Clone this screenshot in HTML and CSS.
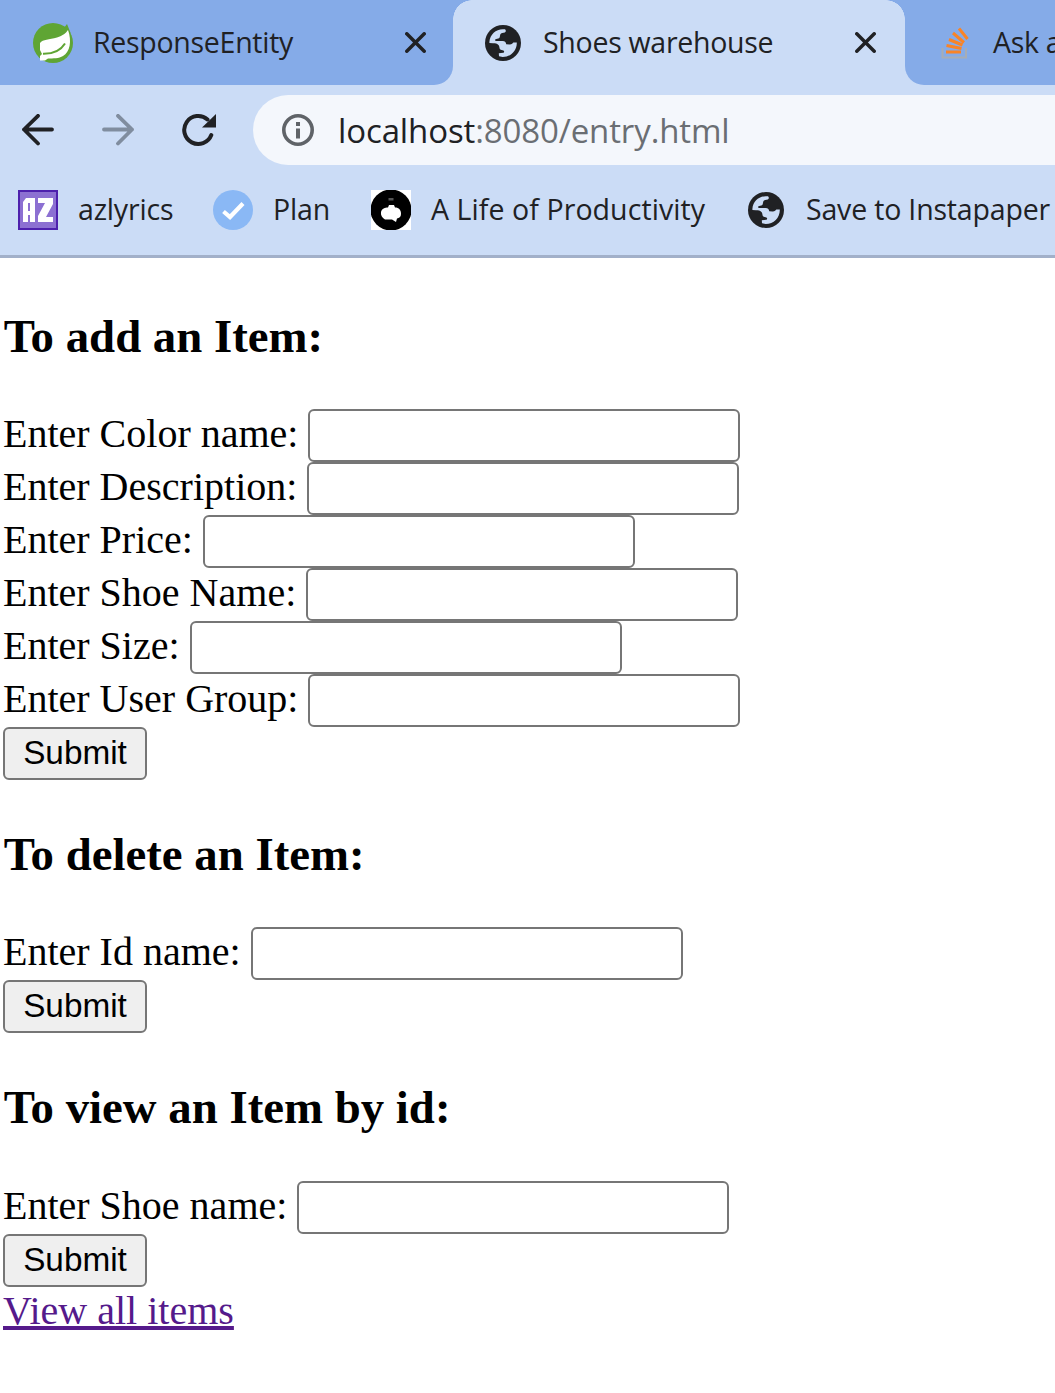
FILE: index.html
```html
<!DOCTYPE html>
<html lang="en">
<head>
<meta charset="utf-8">
<title>Shoes warehouse</title>
<link rel="stylesheet" href="styles.css">
</head>
<body>
<svg class="symbols" aria-hidden="true">
  <symbol id="globe" viewBox="0 0 36 36">
    <circle cx="18" cy="18" r="18" fill="#202124"/>
    <path fill="#cbdcf6" d="M4.400 16.700C5 9.500 11 4 18.200 4.200L20 4.300C20.800 4.900 21 5.900 20.600 6.700C20 8 17.300 7.500 16 8.500C14.500 9.700 15.500 12 14 13.200L10.500 14.200C9.800 14.800 10.200 16 11.300 16L17.500 16.100C20.300 16.300 21 17.800 21.200 19.200L24.500 19.400C27 19.500 27.300 18.500 28.300 17.500L31.800 17.500C32 25.500 25.800 31.900 17.700 31.900L14 31.300L13.800 28.300L18.200 27.800C19 27.600 19.300 26.800 19 26.100C18.400 25.200 17 25.500 15.700 24.800C14 23.800 14.800 21.800 13.700 20.200C12.500 18.400 10 18.300 8 18.200L4.400 18.100Z"/>
  </symbol>
  <symbol id="close" viewBox="0 0 20 20">
    <path d="M1.700 1.700L18.300 18.300M18.300 1.700L1.700 18.300" fill="none" stroke="#202124" stroke-width="3.300" stroke-linecap="round"/>
  </symbol>
</svg>
<header class="browser">
  <div class="tabs">
    <div class="tab tab-first">
      <svg class="favicon spring" viewBox="0 0 40 40">
        <circle cx="20" cy="20" r="20" fill="#5fa534"/>
        <path fill="#5fa534" d="M31 5L34 1L38 11Z"/>
        <path fill="#fff" d="M35 7C39 18 37 29 30 33C26 35.500 20 35.500 15 35.500L12 37.500H7V33L9 31L7 27V20C10 16 16 17 24 14.500C30 12.500 33 10 35 7Z"/>
        <path d="M10 30.800C20 31 28 27 32 20.500" fill="none" stroke="#5fa534" stroke-width="2"/>
      </svg>
      <span class="tab-title t-response">ResponseEntity</span>
      <svg class="close"><use href="#close"/></svg>
    </div>
    <div class="tab tab-active">
      <svg class="globe"><use href="#globe"/></svg>
      <span class="tab-title t-shoes">Shoes warehouse</span>
      <svg class="close"><use href="#close"/></svg>
    </div>
    <div class="tab tab-last">
      <svg class="stack" viewBox="0 0 28 32">
        <path d="M1.500 21V30.500H25V21" fill="none" stroke="#a7adb5" stroke-width="2"/>
        <path d="M5 25H20M5.500 18.500L20.500 21.500M8 12.500L21.500 18M12 6L23 15.500M18 1.500L26.500 12" fill="none" stroke="#f98427" stroke-width="3"/>
      </svg>
      <span class="tab-title t-ask">Ask a</span>
    </div>
  </div>
  <div class="toolbar">
    <svg class="nav back" viewBox="0 0 34 32"><path d="M31 15.500H3M17 1.800L3 15.500L17 29.500" fill="none" stroke="#202124" stroke-width="3.800" stroke-linecap="round" stroke-linejoin="round"/></svg>
    <svg class="nav forward" viewBox="0 0 34 32"><path d="M3 15.500H31M17 1.800L31 15.500L17 29.500" fill="none" stroke="#808d9f" stroke-width="3.800" stroke-linecap="round" stroke-linejoin="round"/></svg>
    <svg class="reload" viewBox="0 0 36 34"><path d="M26.500 6.500A14 14 0 1 0 30.300 22" fill="none" stroke="#202124" stroke-width="4" stroke-linecap="round"/><path d="M35 1V14.500H21Z" fill="#202124"/></svg>
    <div class="address">
      <svg class="info" viewBox="0 0 32 32"><circle cx="16" cy="16" r="14.200" fill="none" stroke="#5f6368" stroke-width="3.600"/><path d="M14 8H18V12H14ZM14 14.500H18V24.500H14Z" fill="#5f6368"/></svg>
      <span class="url"><span class="host">localhost</span>:8080/entry.html</span>
    </div>
  </div>
  <nav class="bookmarks">
    <svg class="favicon" viewBox="0 0 40 40">
      <path d="M0 0H40V40H0Z" fill="#4d20ad"/><path d="M2 2H38V38H2Z" fill="#8c70d2"/>
      <path d="M5 32V12L8 8H17V32H12V25H10V32ZM10 13V21H12V13ZM20 8H35V14L28 27H35V32H20V26L27 13H20Z" fill="#fff" fill-rule="evenodd"/>
    </svg>
    <span class="mark b-az">azlyrics</span>
    <svg class="favicon" viewBox="0 0 40 40"><circle cx="20" cy="20" r="20" fill="#8ab8f5"/><path d="M10.500 21.500L17 27L30 13.500" fill="none" stroke="#fff" stroke-width="4.200"/></svg>
    <span class="mark b-plan">Plan</span>
    <svg class="favicon" viewBox="0 0 40 40"><path d="M0 0H40V40H0Z" fill="#fff"/><circle cx="20" cy="20" r="20.500" fill="#000"/><path d="M17.500 8H22.500V10.500H17.500Z" fill="#555"/><path d="M18 15H23L24 17.500C28 17.500 30 20 30 24C30 27 28 28 26 28.500L25 32L21 29.500H14C11 28 9.500 25 10 22C11 18.500 14 17.500 17 17.500Z" fill="#fff"/></svg>
    <span class="mark b-life">A Life of Productivity</span>
    <svg class="globe"><use href="#globe"/></svg>
    <span class="mark b-save">Save to Instapaper</span>
  </nav>
</header>
<main>
  <h3>To add an Item:</h3>
  <form>
    <div class="row"><label for="color">Enter Color name:</label><input id="color"></div>
    <div class="row"><label for="desc">Enter Description:</label><input id="desc"></div>
    <div class="row"><label for="price">Enter Price:</label><input id="price"></div>
    <div class="row"><label for="shoe">Enter Shoe Name:</label><input id="shoe"></div>
    <div class="row"><label for="size">Enter Size:</label><input id="size"></div>
    <div class="row"><label for="group">Enter User Group:</label><input id="group"></div>
    <button type="button">Submit</button>
  </form>
  <h3 class="delete-title">To delete an Item:</h3>
  <form>
    <div class="row"><label for="id">Enter Id name:</label><input id="id"></div>
    <button type="button">Submit</button>
  </form>
  <h3 class="view-title">To view an Item by id:</h3>
  <form>
    <div class="row"><label for="view">Enter Shoe name:</label><input id="view"></div>
    <button type="button">Submit</button>
  </form>
  <a href="#">View all items</a>
</main>
</body>
</html>
```
FILE: styles.css
```css
* { box-sizing: border-box; }
html, body { margin: 0; width: 1055px; height: 1393px; overflow: hidden; background: #fff; }
svg { display: block; flex: none; }
.symbols { width: 0; height: 0; position: absolute; }
.browser { height: 258px; background: #cbdcf6; border-bottom: 3px solid #a2b0c9; font-family: "Open Sans", sans-serif; color: #202124; }
.tabs { display: flex; height: 85px; background: #cbdcf6; overflow: hidden; }
.tab { display: flex; align-items: center; height: 85px; flex: none; background: #85abe8; white-space: nowrap; }
.tab-first { width: 453px; padding-left: 33px; border-bottom-right-radius: 19px; }
.tab-active { width: 452px; padding-left: 32px; background: #cbdcf6; position: relative; }
.tab-last { width: 150px; padding-left: 36px; border-bottom-left-radius: 19px; overflow: hidden; }
.tab-active::before, .tab-active::after { content: ""; position: absolute; top: 0; width: 19px; height: 19px; }
.tab-active::before { left: 0; background: radial-gradient(circle at 100% 100%, transparent 18.500px, #85abe8 19px); }
.tab-active::after { right: 0; background: radial-gradient(circle at 0 100%, transparent 18.500px, #85abe8 19px); }
.favicon { width: 40px; height: 40px; }
.globe { width: 36px; height: 36px; }
.close { width: 21px; height: 21px; }
.tab-title, .mark { font-size: 28.500px; line-height: 38px; padding-bottom: 2px; white-space: nowrap; }
.tab-title { flex: none; letter-spacing: -0.280px; }
.t-response { margin-left: 20px; width: 312px; }
.t-shoes { margin-left: 22px; width: 312px; }
.stack { width: 28px; height: 32px; }
.t-ask { margin-left: 24px; }
.toolbar { display: flex; align-items: center; height: 90px; padding-left: 21px; }
.nav { width: 34px; height: 32px; }
.forward { margin-left: 46px; }
.reload { width: 36px; height: 34px; margin-left: 46px; }
.address { flex: 1; display: flex; align-items: center; height: 70px; margin-left: 36px; padding-left: 29px; background: #f4f7fc; border-radius: 35px 0 0 35px; }
.info { width: 32px; height: 32px; }
.url { margin-left: 24px; padding-top: 1px; font-size: 33px; line-height: 44px; letter-spacing: -0.120px; color: #6a6e73; white-space: nowrap; }
.host { color: #202124; }
.bookmarks { display: flex; align-items: center; height: 70px; padding-left: 18px; overflow: hidden; }
.mark { flex: none; margin-left: 20px; letter-spacing: -0.180px; }
.b-az { width: 135px; }
.b-plan { width: 98px; }
.b-life { width: 317px; letter-spacing: 0.080px; }
.b-save { margin-left: 22px; }
main { padding: 5px 3px 0; font-family: "Liberation Serif", serif; font-size: 40px; color: #000; }
h3 { margin: 47px 0 46px; padding-left: 0.700px; font-size: 46.800px; line-height: 53px; height: 53px; }
h3.delete-title { margin-top: 48px; }
h3.view-title { height: 54px; margin: 48px 0 46px; }
form { display: flex; flex-direction: column; align-items: flex-start; }
.row { display: flex; height: 53px; gap: 10px; }
label { line-height: 49px; white-space: nowrap; }
input, button { border: 2px solid #767676; border-radius: 6px; font: 33.333px "Liberation Sans", sans-serif; }
input { width: 432px; height: 53px; padding: 2px 5px; background: #fff; }
button { width: 144px; height: 53px; padding: 0 0 2px; background: #efefef; color: #000; }
a { display: block; width: max-content; margin-top: 1px; line-height: 46px; color: #551a8b; text-decoration-thickness: 4px; }
```
